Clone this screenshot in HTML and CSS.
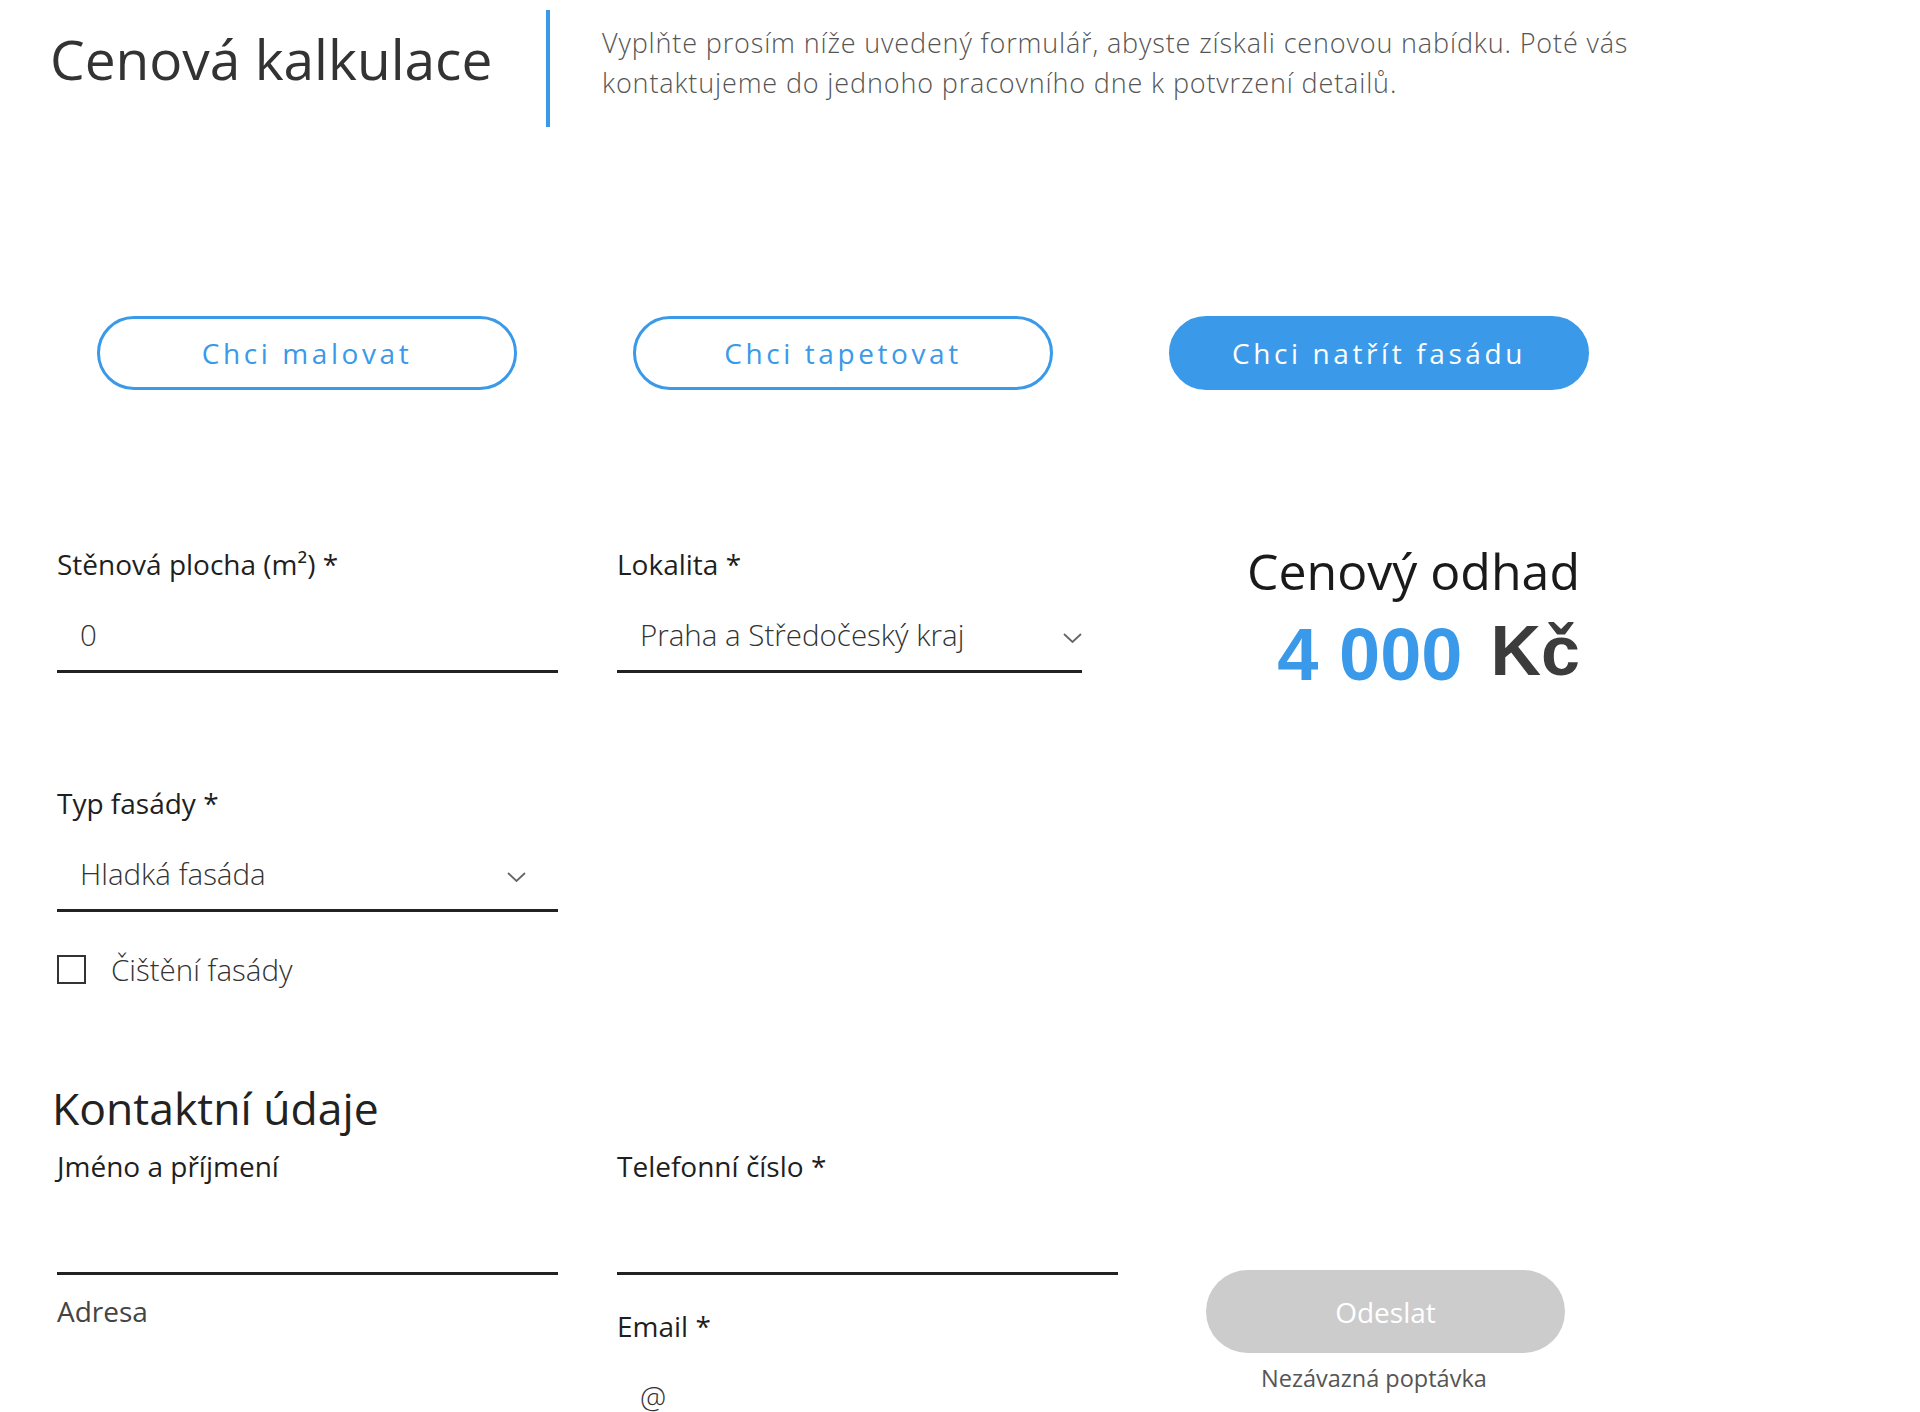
FILE: index.html
```html
<!DOCTYPE html>
<html lang="cs">
<head>
<meta charset="utf-8">
<title>Cenová kalkulace</title>
<link rel="stylesheet" href="styles.css">
</head>
<body>
<main class="page">
  <header class="intro">
    <h1 class="intro-title">Cenová kalkulace</h1>
    <p class="intro-text">Vyplňte prosím níže uvedený formulář, abyste získali cenovou nabídku. Poté vás kontaktujeme do jednoho pracovního dne k potvrzení detailů.</p>
  </header>

  <nav class="modes">
    <button class="mode" type="button">Chci malovat</button>
    <button class="mode" type="button">Chci tapetovat</button>
    <button class="mode mode-active" type="button">Chci natřít fasádu</button>
  </nav>

  <form class="calc">
    <div class="calc-grid">
      <div class="field">
        <label class="field-label" for="area">Stěnová plocha (m²) *</label>
        <input class="field-input" id="area" type="text" value="0">
      </div>
      <div class="field">
        <label class="field-label" for="loc">Lokalita *</label>
        <div class="select-wrap">
          <select class="field-input" id="loc"><option>Praha a Středočeský kraj</option></select>
          <svg class="chevron" width="19" height="10" viewBox="0 0 19 10"><path d="M1 1l8.5 8 8.5-8" fill="none" stroke="#666" stroke-width="1.8"/></svg>
        </div>
      </div>
      <div class="estimate">
        <h2 class="estimate-title">Cenový odhad</h2>
        <p class="estimate-price"><span class="estimate-amount">4&nbsp;000</span><span class="estimate-currency">Kč</span></p>
      </div>
      <div class="field">
        <label class="field-label" for="type">Typ fasády *</label>
        <div class="select-wrap">
          <select class="field-input" id="type"><option>Hladká fasáda</option></select>
          <svg class="chevron chevron-inset" width="19" height="10" viewBox="0 0 19 10"><path d="M1 1l8.5 8 8.5-8" fill="none" stroke="#666" stroke-width="1.8"/></svg>
        </div>
      </div>
    </div>

    <label class="check"><input class="check-box" type="checkbox"><span>Čištění fasády</span></label>

    <h2 class="contact-title">Kontaktní údaje</h2>
    <div class="contact">
      <div class="contact-col">
        <div class="field">
          <label class="field-label" for="name">Jméno a příjmení</label>
          <input class="field-input" id="name" type="text">
        </div>
        <div class="field field-address">
          <label class="field-label field-label-muted" for="addr">Adresa</label>
          <input class="field-input" id="addr" type="text">
        </div>
      </div>
      <div class="contact-col">
        <div class="field">
          <label class="field-label" for="phone">Telefonní číslo *</label>
          <input class="field-input" id="phone" type="text">
        </div>
        <div class="field field-email">
          <label class="field-label" for="email">Email *</label>
          <input class="field-input" id="email" type="text" placeholder="@">
        </div>
      </div>
      <div class="contact-submit">
        <button class="submit" type="button">Odeslat</button>
        <p class="submit-note">Nezávazná poptávka</p>
      </div>
    </div>
  </form>
</main>
</body>
</html>
```
FILE: styles.css
```css
* { box-sizing: border-box; }
html, body { margin: 0; background: #fff; }
body { font-family: "Open Sans", "Lato", "Liberation Sans", sans-serif; color: #222; }
.page { width: 1920px; }

.intro { display: flex; align-items: flex-start; padding: 10px 0 0 50px; }
.intro-title { flex: 0 0 496px; margin: 21px 0 0; font-size: 55px; line-height: 55px; font-weight: 400; color: #333; }
.intro-text { margin: 0; width: 1130px; height: 117px; padding: 13px 0 0 52px; border-left: 4px solid #3a99e8; font-size: 27px; line-height: 40px; font-weight: 300; letter-spacing: 0.85px; color: #555; }

.modes { display: flex; gap: 116px; margin-top: 189px; padding-left: 97px; }
.mode { width: 420px; height: 74px; padding: 0; border: 3px solid #3a99e8; border-radius: 37px; background: #fff; color: #3a99e8; font-family: inherit; font-size: 28px; font-weight: 400; letter-spacing: 3.6px; cursor: pointer; }
.mode-active { background: #3a99e8; color: #fff; }

.calc { margin: 156px 0 0; padding-left: 57px; }
.calc-grid { display: grid; grid-template-columns: 501px 465px 439px; column-gap: 59px; row-gap: 112px; align-items: start; }

.field { display: flex; flex-direction: column; }
.field-label { font-size: 28px; line-height: 36px; font-weight: 500; color: #1f1f1f; }
.field-label-muted { color: #444; }
.field-input { display: block; margin-top: 16px; width: 100%; height: 75px; padding: 0 0 0 23px; border: 0; border-bottom: 3px solid #222; border-radius: 0; background: transparent; font-family: inherit; font-size: 29.5px; font-weight: 300; color: #333; outline: none; appearance: none; -webkit-appearance: none; }
.field-input::placeholder { color: #333; opacity: 1; }
.select-wrap { position: relative; margin-top: 16px; }
.select-wrap .field-input { margin-top: 0; }
.chevron { position: absolute; top: 35px; right: 0; pointer-events: none; }
.chevron-inset { right: 32px; }

.estimate { grid-column: 3; grid-row: 1 / span 2; text-align: right; }
.estimate-title { margin: -2px 0 0; font-size: 50px; line-height: 54px; font-weight: 400; color: #1a1a1a; }
.estimate-price { margin: 13px 0 0; font-family: "Liberation Sans", Arial, sans-serif; font-size: 74px; font-weight: 700; line-height: 80px; white-space: nowrap; }
.estimate-amount { color: #3a99e8; }
.estimate-currency { margin-left: 28px; font-size: 70px; color: #3c3c3c; vertical-align: 5px; }

.check { display: flex; align-items: center; gap: 25px; margin-top: 43px; font-size: 29.5px; line-height: 29px; font-weight: 300; color: #333; }
.check-box { flex: none; width: 29px; height: 29px; margin: 0; border: 2px solid #333; border-radius: 0; background: #fff; appearance: none; -webkit-appearance: none; }

.contact-title { margin: 98px 0 14px -5px; font-size: 44.5px; line-height: 52px; font-weight: 400; color: #222; }
.contact { display: flex; align-items: flex-start; }
.contact-col { display: flex; flex-direction: column; width: 501px; }
.contact-col + .contact-col { margin-left: 59px; }
.field-address { margin-top: 18px; }
.field-email { margin-top: 33px; }
.contact-submit { display: flex; flex-direction: column; align-items: flex-start; width: 359px; margin-left: 88px; padding-top: 122px; }
.submit { width: 359px; height: 83px; padding: 0; border: 0; border-radius: 42px; background: #ccc; color: #fff; font-family: inherit; font-size: 28px; font-weight: 400; }
.submit-note { margin: 10px 0 0 55px; font-size: 23.5px; line-height: 30px; color: #555; }
```
